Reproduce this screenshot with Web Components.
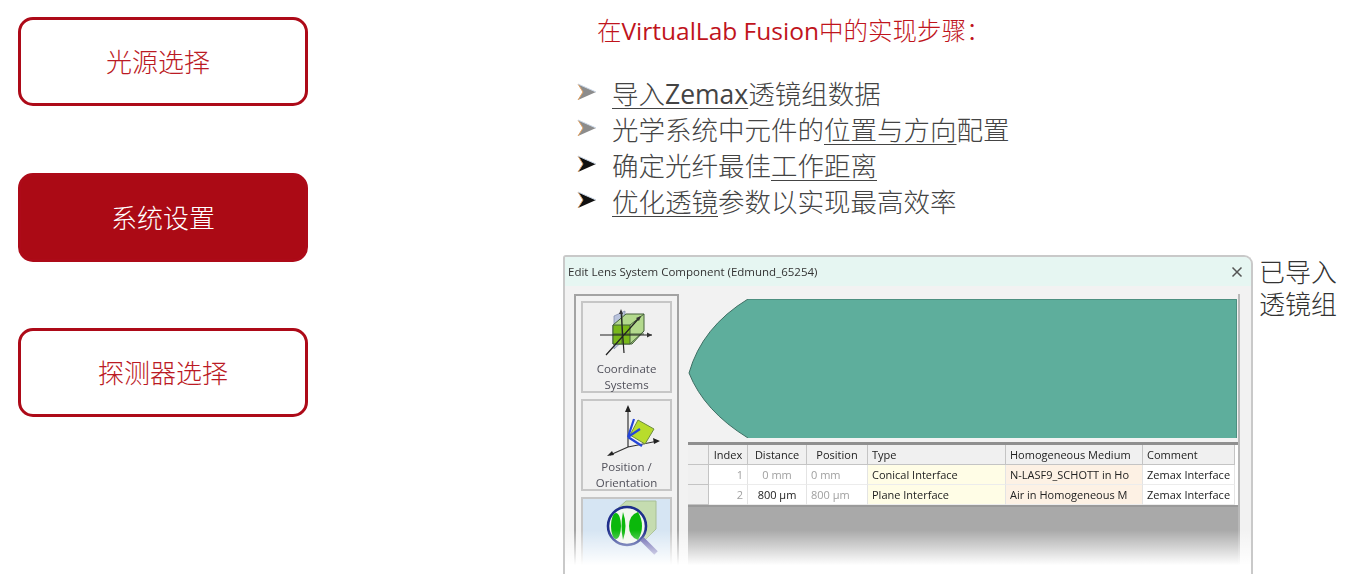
<!DOCTYPE html>
<html lang="zh">
<head>
<meta charset="utf-8">
<title>VirtualLab Fusion</title>
<style>
  html, body { margin: 0; background: #fff; }
  body { width: 1348px; height: 574px; overflow: hidden; }
</style>
</head>
<body>
<slide-page>
  <step-button slot="steps" shift="-5" style="margin-top:17px">光源选择</step-button>
  <step-button slot="steps" filled style="margin-top:67px">系统设置</step-button>
  <step-button slot="steps" style="margin-top:66px">探测器选择</step-button>

  <span slot="title">在<b>VirtualLab Fusion</b>中的实现步骤：</span>

  <arrow-item slot="items" tone="grey"><u>导入<b>Zemax</b></u>透镜组数据</arrow-item>
  <arrow-item slot="items" tone="grey">光学系统中元件的<u>位置与方向</u>配置</arrow-item>
  <arrow-item slot="items">确定光纤最佳<u>工作距离</u></arrow-item>
  <arrow-item slot="items"><u>优化透镜</u>参数以实现最高效率</arrow-item>

  <lens-dialog slot="dialog"></lens-dialog>
  <span slot="note">已导入<br>透镜组</span>
</slide-page>

<script>
// fuentes usadas en toda la diapositiva
const CJK = '"Noto Sans CJK SC", sans-serif';
const LATIN = '"Open Sans", "Noto Sans CJK SC", sans-serif';

class SlidePage extends HTMLElement {
  constructor() {
    super();
    this.attachShadow({ mode: "open" });
    this.shadowRoot.innerHTML = `
    <style>
      :host { display: flex; width: 1348px; height: 574px; font-family: ${CJK}; font-weight: 300; }
      .steps { width: 290px; margin-left: 18px; display: flex; flex-direction: column; }
      .main { margin-left: 255px; width: 785px; display: flex; flex-direction: column; }
      .title { margin: 12px 0 0 34px; height: 36px; font-size: 24.5px; line-height: 36px; color: #c0141c; white-space: nowrap; }
      ::slotted([slot="title"]) { letter-spacing: 0; }
      .items { margin: 26px 0 0 14px; display: flex; flex-direction: column; }
      .bottom { margin-top: 37px; display: flex; align-items: flex-start; }
      .note { margin: 0 0 0 6px; padding-top: 0; font-size: 26px; line-height: 32px; color: #333; }
    </style>
    <div class="steps"><slot name="steps"></slot></div>
    <div class="main">
      <div class="title"><slot name="title"></slot></div>
      <div class="items"><slot name="items"></slot></div>
      <div class="bottom">
        <slot name="dialog"></slot>
        <div class="note"><slot name="note"></slot></div>
      </div>
    </div>`;
  }
}

class StepButton extends HTMLElement {
  constructor() {
    super();
    this.attachShadow({ mode: "open" });
    const shift = this.getAttribute("shift") || 0;
    this.shadowRoot.innerHTML = `
    <style>
      :host { display: flex; align-items: center; justify-content: center; box-sizing: border-box;
        width: 290px; height: 89px; border: 3px solid #ad0a18; border-radius: 15px; background: #fff;
        color: #bb1a24; font-size: 26px; padding-bottom: 3px; }
      :host([filled]) { background: #ab0a15; color: #fff; }
      span { transform: translateX(${shift}px); }
    </style>
    <span><slot></slot></span>`;
  }
}

class ArrowItem extends HTMLElement {
  constructor() {
    super();
    this.attachShadow({ mode: "open" });
    const dark = this.getAttribute("tone") === "grey" ? "#8c8c8c" : "#111";
    this.shadowRoot.innerHTML = `
    <style>
      :host { display: flex; align-items: center; height: 36px; font-size: 26.5px; color: #444; white-space: nowrap; }
      svg { width: 20px; height: 18px; margin-right: 15px; flex: none; }
      ::slotted(*) { text-underline-offset: 3px; }
    </style>
    <svg viewBox="0 0 20 18">
      <polygon points="1,1 19,9 1,17 6,9" fill="${dark}"/>
      <polyline points="1,1 6,9 1,17" fill="none" stroke="#e0a060" stroke-width="1"/>
      <polyline points="1,1 19,9" fill="none" stroke="#c9d6e6" stroke-width="1"/>
    </svg>
    <span><slot></slot></span>`;
  }
}

class ToolButton extends HTMLElement {
  constructor() {
    super();
    this.attachShadow({ mode: "open" });
    this.shadowRoot.innerHTML = `
    <style>
      :host { display: flex; flex-direction: column; align-items: center; box-sizing: border-box; width: 91px; height: 92px;
        border: 2px solid #c6c6c6; background: #f0f0f0; font: 11.5px/16px "Open Sans", sans-serif; color: #50505a; text-align: center; }
      :host([active]) { background: #d6e5f3; }
      .icon { height: 58px; margin-bottom: 0; }
    </style>
    <div class="icon"><slot name="icon"></slot></div>
    <slot></slot>`;
  }
}

class LensTable extends HTMLElement {
  constructor() {
    super();
    this.attachShadow({ mode: "open" });
    this.shadowRoot.innerHTML = `
    <style>
      :host { display: block; font: 11px/20px "Open Sans", sans-serif; color: #222; }
      .grid { display: grid; grid-template-columns: 21px 39px 59px 61px 138px 137px 92px; background: #fff;
        border-top: 3px solid #8f8f8f; border-bottom: 2px solid #9a9a9a; overflow: hidden; }
      .grid > div { height: 20px; padding: 0 4px; box-sizing: border-box; white-space: nowrap; overflow: hidden;
        border-right: 1px solid #e4e4e4; border-bottom: 1px solid #ececec; }
      .h { background: #f0f0f0; border-color: #c4c4c4 !important; }
      .r { text-align: right; }
      .c { text-align: center; }
      .mute { color: #a0a0a0; }
      .y { background: #fffde6; }
      .o { background: #fdf1e4; }
      .gap { height: 58px; background: #a9a9a9; }
    </style>
    <div class="grid">
      <div class="h"></div><div class="h c" style="padding:0">Index</div><div class="h c" style="padding:0">Distance</div><div class="h c" style="padding:0">Position</div><div class="h">Type</div><div class="h">Homogeneous Medium</div><div class="h">Comment</div>
      <div class="h"></div><div class="r mute">1</div><div class="c mute">0 mm</div><div class="mute">0 mm</div><div class="y">Conical Interface</div><div class="o">N-LASF9_SCHOTT in Ho</div><div>Zemax Interface</div>
      <div class="h"></div><div class="r mute">2</div><div class="c">800 µm</div><div class="mute">800 µm</div><div class="y">Plane Interface</div><div class="o">Air in Homogeneous M</div><div>Zemax Interface</div>
    </div>
    <div class="gap"></div>`;
  }
}

class LensDialog extends HTMLElement {
  constructor() {
    super();
    this.attachShadow({ mode: "open" });
    this.shadowRoot.innerHTML = `
    <style>
      :host { display: block; position: relative; box-sizing: border-box; width: 690px; height: 319px; overflow: hidden;
        background: #f2f2f2; border: 2px solid #c9c9c9; border-bottom: 0; border-radius: 3px 9px 0 0; filter: blur(.35px); }
      .bar { display: flex; align-items: center; justify-content: space-between; height: 29px; padding: 0 8px 0 3px;
        background: #e6f6f2; font: 11.5px "Open Sans", sans-serif; color: #333; }
      .bar svg { width: 12px; height: 12px; }
      .body { display: flex; padding: 8px 0 0 9px; }
      .side { box-sizing: border-box; width: 105px; height: 290px; border: 2px solid #a3a3a3; border-bottom: 0; padding: 5px 0 0 5px;
        display: flex; flex-direction: column; gap: 6px; flex: none; }
      .right { margin-left: 9px; width: 550px; padding-top: 5px; border-right: 2px solid #b9b9b9; }
      .preview { display: block; width: 549px; height: 139px; }
      lens-table { margin-top: 4px; }
      .fade { position: absolute; left: 0; right: 0; bottom: 0; height: 44px; background: linear-gradient(rgba(255,255,255,0), #fff 80%); }
    </style>
    <div class="bar">
      <span>Edit Lens System Component (Edmund_65254)</span>
      <svg viewBox="0 0 12 12"><path d="M1.5 1.5l9 9M10.5 1.5l-9 9" stroke="#555" stroke-width="1.5"/></svg>
    </div>
    <div class="body">
      <div class="side">
        <tool-button>
          <svg slot="icon" width="70" height="58" viewBox="0 0 70 58">
            <polygon points="22,13 33,8 33,36 22,46" fill="#b9c3dc" stroke="#7c86a8" stroke-width=".7"/>
            <polygon points="21,22 34,11 52,11 52,28 40,41 21,41" fill="#b3d98d" stroke="#44603a"/>
            <polygon points="21,22 38,22 38,41 21,41" fill="#79b81a" stroke="#44603a"/>
            <path d="M38 22l14-11M38 41l14-13M21 31h31M30 11v30" stroke="#44603a" fill="none"/>
            <path d="M8 32h52M14 52l34-38M29 8l3 42" stroke="#222" stroke-width="1.2" fill="none"/>
            <path d="M60 32l-5-2.5v5zM49 13l-5 2 3 3zM29 6l-2 5 4 0z" fill="#333"/>
          </svg>
          Coordinate<br>Systems
        </tool-button>
        <tool-button>
          <svg slot="icon" width="70" height="58" viewBox="0 0 70 58">
            <path d="M36 9v37M36 46l30-6M36 46L18 54" stroke="#333" stroke-width="1.2" fill="none"/>
            <path d="M36 4l-3 7h6zM68 40l-7-3 1 6zM15 55l7-1-2-4z" fill="#222"/>
            <polygon points="46,19 62,28 53,43 38,34" fill="#b8dc2c" stroke="#6d8c40"/>
            <path d="M36 36l6-18M36 36l12-8M36 36l14 9" stroke="#2545d8" stroke-width="2.2" fill="none"/>
          </svg>
          Position /<br>Orientation
        </tool-button>
        <tool-button active>
          <svg slot="icon" width="70" height="58" viewBox="0 0 70 58">
            <polygon points="23,12 34,2 64,2 64,30 52,42 23,42" fill="#c5dcb0" stroke="#a8bf96"/>
            <circle cx="35" cy="27" r="19" fill="#f2f7ee" stroke="#1f2f8c" stroke-width="2.6"/>
            <path d="M50 40l14 14" stroke="#5a57a8" stroke-width="5"/>
            <ellipse cx="24" cy="27" rx="5" ry="13" fill="#0bb80b"/>
            <path d="M31 13q5 14 0 28q-3-14 0-28z" fill="#0bb80b"/>
            <path d="M46 13q8 14 0 28q-9-3-9-14t9-14z" fill="#0bb80b"/>
          </svg>
        </tool-button>
      </div>
      <div class="right">
        <svg class="preview" viewBox="0 0 549 139" preserveAspectRatio="none">
          <rect width="549" height="139" fill="#f2f2f2"/>
          <rect width="549" height="139" fill="#fff" opacity=".0"/>
          <path d="M60 0H549V139H60Q16 112 1 74Q14 28 60 0Z" fill="#5eae9c"/>
          <path d="M60 0Q14 28 1 74Q16 112 60 139" fill="none" stroke="#3f6f64" stroke-width="1"/>
          <path d="M60 .5H548.5V139" fill="none" stroke="#4d8f80"/>
        </svg>
        <lens-table></lens-table>
      </div>
    </div>
    <div class="fade"></div>`;
  }
}

customElements.define("slide-page", SlidePage);
customElements.define("step-button", StepButton);
customElements.define("arrow-item", ArrowItem);
customElements.define("tool-button", ToolButton);
customElements.define("lens-table", LensTable);
customElements.define("lens-dialog", LensDialog);
</script>
<style>
  b { font-family: "Open Sans", "Noto Sans CJK SC", sans-serif; font-weight: 400; }
  u { text-decoration-thickness: 1px; text-underline-offset: 4px; }
</style>
</body>
</html>
